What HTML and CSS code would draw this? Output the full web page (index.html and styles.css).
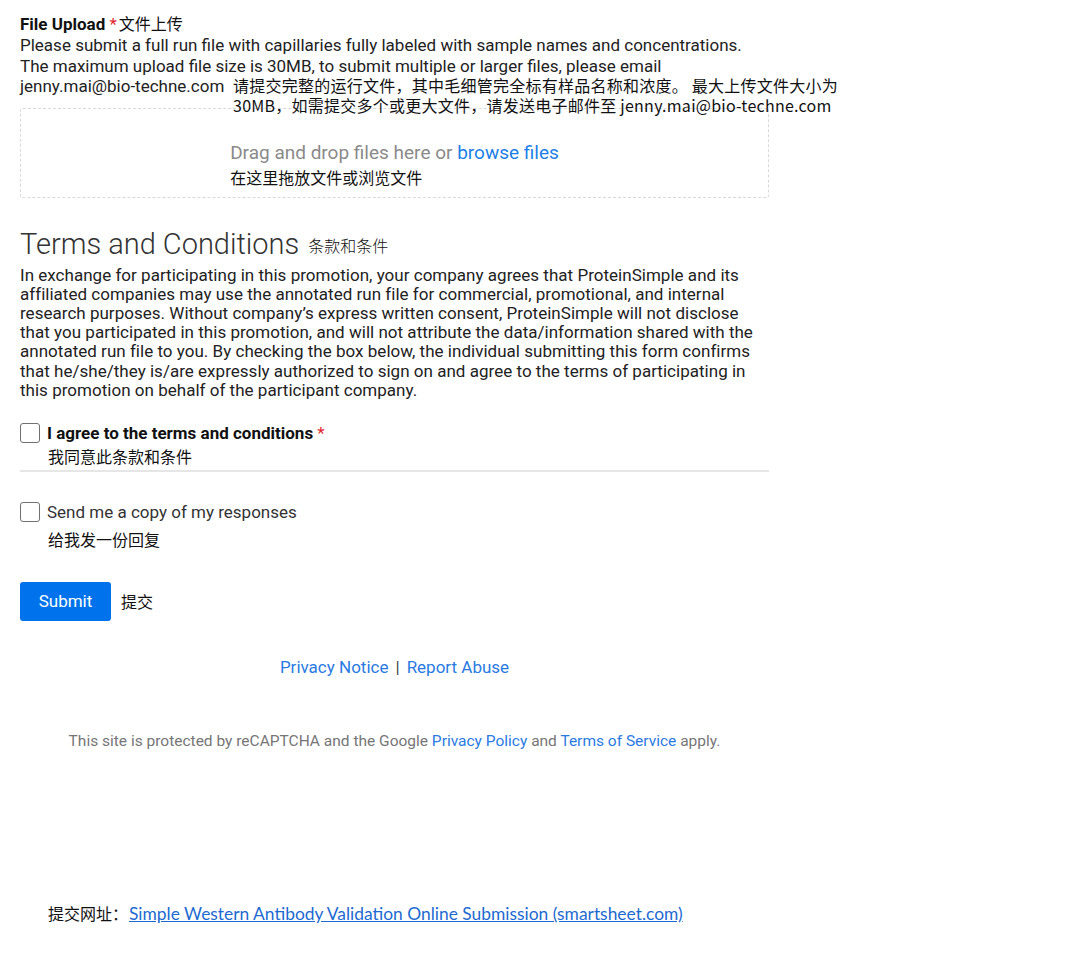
FILE: index.html
```html
<!DOCTYPE html>
<html lang="en">
<head>
<meta charset="utf-8">
<title>Form</title>
<link rel="stylesheet" href="styles.css">
</head>
<body>
<main class="form">
  <section class="field upload">
    <div class="label"><strong>File Upload</strong> <span class="req">*</span><span class="cn cn-inline">文件上传</span></div>
    <p class="desc">Please submit a full run file with capillaries fully labeled with sample names and concentrations.<br>The maximum upload file size is 30MB, to submit multiple or larger files, please email<br>jenny.mai@bio-techne.com<span class="cn note">请提交完整的运行文件，其中毛细管完全标有样品名称和浓度。 最大上传文件大小为<br>30MB，如需提交多个或更大文件，请发送电子邮件至 jenny.mai@bio-techne.com</span></p>
    <div class="dropzone">
      <div class="drop-inner">
        <div class="drop-text">Drag and drop files here or <a class="link">browse files</a></div>
        <div class="cn drop-cn">在这里拖放文件或浏览文件</div>
      </div>
    </div>
  </section>

  <section class="terms">
    <h2 class="title">Terms and Conditions <span class="cn title-cn">条款和条件</span></h2>
    <p class="terms-text">In exchange for participating in this promotion, your company agrees that ProteinSimple and its<br>affiliated companies may use the annotated run file for commercial, promotional, and internal<br>research purposes. Without company’s express written consent, ProteinSimple will not disclose<br>that you participated in this promotion, and will not attribute the data/information shared with the<br>annotated run file to you. By checking the box below, the individual submitting this form confirms<br>that he/she/they is/are expressly authorized to sign on and agree to the terms of participating in<br>this promotion on behalf of the participant company.</p>
  </section>

  <section class="check agree">
    <div class="check-row"><span class="box"></span><span class="check-label bold">I agree to the terms and conditions <span class="req">*</span></span></div>
    <div class="cn check-cn">我同意此条款和条件</div>
  </section>

  <section class="check copy">
    <div class="check-row"><span class="box"></span><span class="check-label">Send me a copy of my responses</span></div>
    <div class="cn check-cn copy-cn">给我发一份回复</div>
  </section>

  <div class="submit-row">
    <button class="submit">Submit</button><span class="cn submit-cn">提交</span>
  </div>

  <div class="footer-links"><a class="link">Privacy Notice</a><span class="sep">|</span><a class="link">Report Abuse</a></div>

  <div class="recaptcha">This site is protected by reCAPTCHA and the Google <a class="link">Privacy Policy</a> and <a class="link">Terms of Service</a> apply.</div>
</main>

<div class="source"><span class="cn">提交网址：</span><a class="source-link">Simple Western Antibody Validation Online Submission (smartsheet.com)</a></div>
</body>
</html>
```
FILE: styles.css
```css
html, body {
  margin: 0;
  padding: 0;
  background: #fff;
}
body {
  font-family: Roboto, "Noto Sans CJK SC", sans-serif;
  color: #222;
  width: 1080px;
  min-height: 961px;
  overflow: hidden;
}
.cn {
  font-family: "Noto Sans CJK SC", sans-serif;
  color: #111;
  font-size: 16px;
  letter-spacing: 0;
}
.form {
  width: 749px;
  padding: 12px 0 0 20px;
}
.label {
  font-size: 17px;
  line-height: 22px;
  color: #111;
}
.label strong { font-weight: 700; }
.req { color: #e0282e; font-weight: 400; }
.cn-inline { margin-left: 2px; }
.desc {
  position: relative;
  margin: 0;
  font-size: 17px;
  line-height: 20.5px;
  color: #222;
  white-space: nowrap;
}
.note {
  position: absolute;
  left: 213px;
  top: 40px;
  line-height: 20px;
  letter-spacing: 0.25px;
}
.dropzone {
  margin-top: 11px;
  padding: 33px 0 8px;
  border: 1px dashed #d9d9d9;
  border-radius: 3px;
  display: flex;
  justify-content: center;
}
.drop-text {
  font-size: 19px;
  color: #8a8a8a;
  line-height: 22px;
}
.link { color: #2a7ae2; text-decoration: none; }
.drop-text .link { color: #1d7fe6; }
.drop-cn { line-height: 24px; margin-top: 1px; margin-left: 0; }

.terms { margin-top: 29px; }
.title {
  margin: 0;
  font-size: 29px;
  font-weight: 300;
  color: #333;
  line-height: 34px;
}
.title-cn { vertical-align: 2px; margin-left: 2px; }
.terms-text {
  margin: 4px 0 0;
  font-size: 17px;
  line-height: 19.2px;
  color: #222;
  white-space: nowrap;
  letter-spacing: 0.02px;
}

.agree {
  margin-top: 23px;
  padding-bottom: 1px;
  border-bottom: 2px solid #e6e6e6;
}
.check-row {
  display: flex;
  align-items: center;
  gap: 7px;
  height: 20px;
}
.box {
  width: 18px;
  height: 18px;
  border: 1px solid #707070;
  border-radius: 3px;
  flex: none;
}
.check-label { font-size: 17px; color: #333; }
.check-label.bold { font-weight: 700; color: #111; }
.check-cn { margin-left: 28px; line-height: 26px; }
.copy { margin-top: 30px; }
.copy-cn { margin-top: 4px; }

.submit-row {
  margin-top: 30px;
  display: flex;
  align-items: center;
  gap: 10px;
}
.submit {
  width: 91px;
  height: 39px;
  background: #0073ec;
  color: #fff;
  border: none;
  border-radius: 3px;
  font-family: Roboto, sans-serif;
  font-size: 17px;
  padding: 0;
}

.footer-links {
  margin-top: 36px;
  text-align: center;
  font-size: 17px;
  line-height: 20px;
}
.sep { color: #444; margin: 0 7px; }
.recaptcha {
  margin-top: 54px;
  text-align: center;
  font-size: 15.5px;
  color: #767676;
  line-height: 20px;
}
.source {
  margin: 152px 0 0 48px;
  font-size: 16px;
  line-height: 20px;
}
.source-link {
  font-family: Lato, sans-serif;
  font-size: 17.4px;
  color: #1d6ad1;
  text-decoration: underline;
  margin-left: 1px;
}
```
